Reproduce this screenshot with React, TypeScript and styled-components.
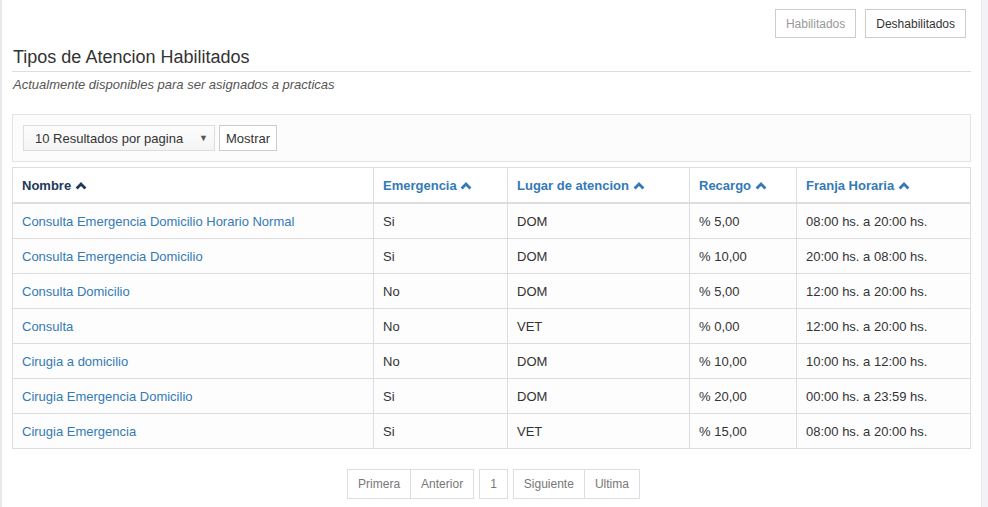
import React from "react";
import styled, { createGlobalStyle } from "styled-components";

const GlobalStyle = createGlobalStyle`
  html, body {
    margin: 0;
    padding: 0;
    background: #fff;
    font-family: "Liberation Sans", Arial, sans-serif;
    font-size: 13px;
    color: #333;
  }
`;

type Row = {
  nombre: string;
  emergencia: string;
  lugar: string;
  recargo: string;
  franja: string;
};

const rows: Row[] = [
  { nombre: "Consulta Emergencia Domicilio Horario Normal", emergencia: "Si", lugar: "DOM", recargo: "% 5,00", franja: "08:00 hs. a 20:00 hs." },
  { nombre: "Consulta Emergencia Domicilio", emergencia: "Si", lugar: "DOM", recargo: "% 10,00", franja: "20:00 hs. a 08:00 hs." },
  { nombre: "Consulta Domicilio", emergencia: "No", lugar: "DOM", recargo: "% 5,00", franja: "12:00 hs. a 20:00 hs." },
  { nombre: "Consulta", emergencia: "No", lugar: "VET", recargo: "% 0,00", franja: "12:00 hs. a 20:00 hs." },
  { nombre: "Cirugia a domicilio", emergencia: "No", lugar: "DOM", recargo: "% 10,00", franja: "10:00 hs. a 12:00 hs." },
  { nombre: "Cirugia Emergencia Domicilio", emergencia: "Si", lugar: "DOM", recargo: "% 20,00", franja: "00:00 hs. a 23:59 hs." },
  { nombre: "Cirugia Emergencia", emergencia: "Si", lugar: "VET", recargo: "% 15,00", franja: "08:00 hs. a 20:00 hs." },
];

const columns = [
  { label: "Nombre", width: 361, active: true },
  { label: "Emergencia", width: 134 },
  { label: "Lugar de atencion", width: 182 },
  { label: "Recargo", width: 107 },
  { label: "Franja Horaria", width: 174 },
];

function SortIcon() {
  return (
    <svg width="12" height="9" viewBox="0 0 12 9">
      <polyline points="1.6,7.4 6,3 10.4,7.4" fill="none" stroke="currentColor" strokeWidth="2.8" />
    </svg>
  );
}

export default function App() {
  return (
    <>
      <GlobalStyle />
      <Frame>
        <Main>
          <ToggleBar>
            <ToggleButton disabledLook>Habilitados</ToggleButton>
            <ToggleButton>Deshabilitados</ToggleButton>
          </ToggleBar>
          <Title>Tipos de Atencion Habilitados</Title>
          <Subtitle>Actualmente disponibles para ser asignados a practicas</Subtitle>

          <FilterPanel>
            <PageSelect>
              <span>10 Resultados por pagina</span>
              <Caret>▼</Caret>
            </PageSelect>
            <ShowButton>Mostrar</ShowButton>
          </FilterPanel>

          <Table>
            <colgroup>
              {columns.map((c) => (
                <col key={c.label} style={{ width: c.width }} />
              ))}
            </colgroup>
            <thead>
              <tr>
                {columns.map((c) => (
                  <HeadCell key={c.label} active={c.active}>
                    {c.label} <SortIcon />
                  </HeadCell>
                ))}
              </tr>
            </thead>
            <tbody>
              {rows.map((r) => (
                <tr key={r.nombre}>
                  <Cell>
                    <NameLink>{r.nombre}</NameLink>
                  </Cell>
                  <Cell>{r.emergencia}</Cell>
                  <Cell>{r.lugar}</Cell>
                  <Cell>{r.recargo}</Cell>
                  <Cell>{r.franja}</Cell>
                </tr>
              ))}
            </tbody>
          </Table>

          <Pager>
            <PagerGroup>
              <PageItem>Primera</PageItem>
              <PageItem>Anterior</PageItem>
            </PagerGroup>
            <PagerGroup>
              <PageItem>1</PageItem>
            </PagerGroup>
            <PagerGroup>
              <PageItem>Siguiente</PageItem>
              <PageItem>Ultima</PageItem>
            </PagerGroup>
          </Pager>
        </Main>
        <SideStrip />
      </Frame>
    </>
  );
}

const Frame = styled.div`
  display: flex;
  width: 988px;
  height: 507px;
  overflow: hidden;
`;

const Main = styled.div`
  width: 982px;
  border-left: 2px solid #e8e8e8;
  padding: 9px 10px 0 10px;
  box-sizing: border-box;
`;

const SideStrip = styled.div`
  width: 6px;
  background: #f3f3f7;
  border-left: 1px solid #e6e6ec;
`;

const ToggleBar = styled.div`
  display: flex;
  justify-content: flex-end;
  gap: 9px;
  padding-right: 5px;
`;

const ToggleButton = styled.button<{ disabledLook?: boolean }>`
  height: 29px;
  padding: 0 10px;
  background: #fff;
  border: 1px solid #ccc;
  border-radius: 0;
  font-family: "Liberation Sans", Arial, sans-serif;
  font-size: 12px;
  color: ${(p) => (p.disabledLook ? "#999" : "#333")};
  cursor: pointer;
`;

const Title = styled.h2`
  margin: 9px 0 0 0;
  padding: 0 0 4px 1px;
  font-size: 18px;
  line-height: 20px;
  font-weight: normal;
  color: #333;
  border-bottom: 1px solid #ddd;
`;

const Subtitle = styled.p`
  margin: 5px 0 0 1px;
  font-size: 13px;
  line-height: 16px;
  font-style: italic;
  color: #555;
`;

const FilterPanel = styled.div`
  display: flex;
  gap: 4px;
  margin-top: 21px;
  padding: 10px;
  background: #fcfcfc;
  border: 1px solid #e3e3e3;
  width: 959px;
  box-sizing: border-box;
`;

const PageSelect = styled.div`
  display: flex;
  align-items: center;
  justify-content: space-between;
  width: 192px;
  height: 26px;
  box-sizing: border-box;
  padding: 0 6px 0 11px;
  border: 1px solid #ddd;
  background: linear-gradient(#fdfdfd, #f4f4f4);
  font-size: 13px;
  color: #333;
`;

const Caret = styled.span`
  font-size: 9px;
  color: #555;
`;

const ShowButton = styled.button`
  height: 26px;
  padding: 0 6px;
  background: #fff;
  border: 1px solid #ccc;
  font-family: "Liberation Sans", Arial, sans-serif;
  font-size: 13px;
  color: #333;
`;

const Table = styled.table`
  margin-top: 5px;
  width: 959px;
  border-collapse: collapse;
  table-layout: fixed;
  border: 1px solid #ddd;
`;

const HeadCell = styled.th<{ active?: boolean }>`
  height: 34px;
  padding: 0 9px;
  text-align: left;
  font-size: 13px;
  font-weight: bold;
  color: ${(p) => (p.active ? "#23395b" : "#337ab7")};
  border: 1px solid #ddd;
  border-bottom: 2px solid #ddd;
  background: #fff;
  white-space: nowrap;

  svg {
    vertical-align: 0px;
  }
`;

const Cell = styled.td`
  height: 34px;
  padding: 0 9px;
  font-size: 13px;
  color: #333;
  border: 1px solid #ddd;
  background: #fdfdfd;
  white-space: nowrap;
`;

const NameLink = styled.a`
  color: #337ab7;
  text-decoration: none;
  cursor: pointer;
`;

const Pager = styled.div`
  display: flex;
  justify-content: center;
  gap: 5px;
  margin-top: 20px;
  width: 959px;
  padding-left: 4px;
  box-sizing: border-box;
`;

const PagerGroup = styled.div`
  display: flex;
`;

const PageItem = styled.span`
  display: flex;
  align-items: center;
  height: 28px;
  padding: 0 10px;
  border: 1px solid #ddd;
  margin-left: -1px;
  font-size: 12px;
  color: #777;
  background: #fff;

  &:first-child {
    margin-left: 0;
  }
`;
